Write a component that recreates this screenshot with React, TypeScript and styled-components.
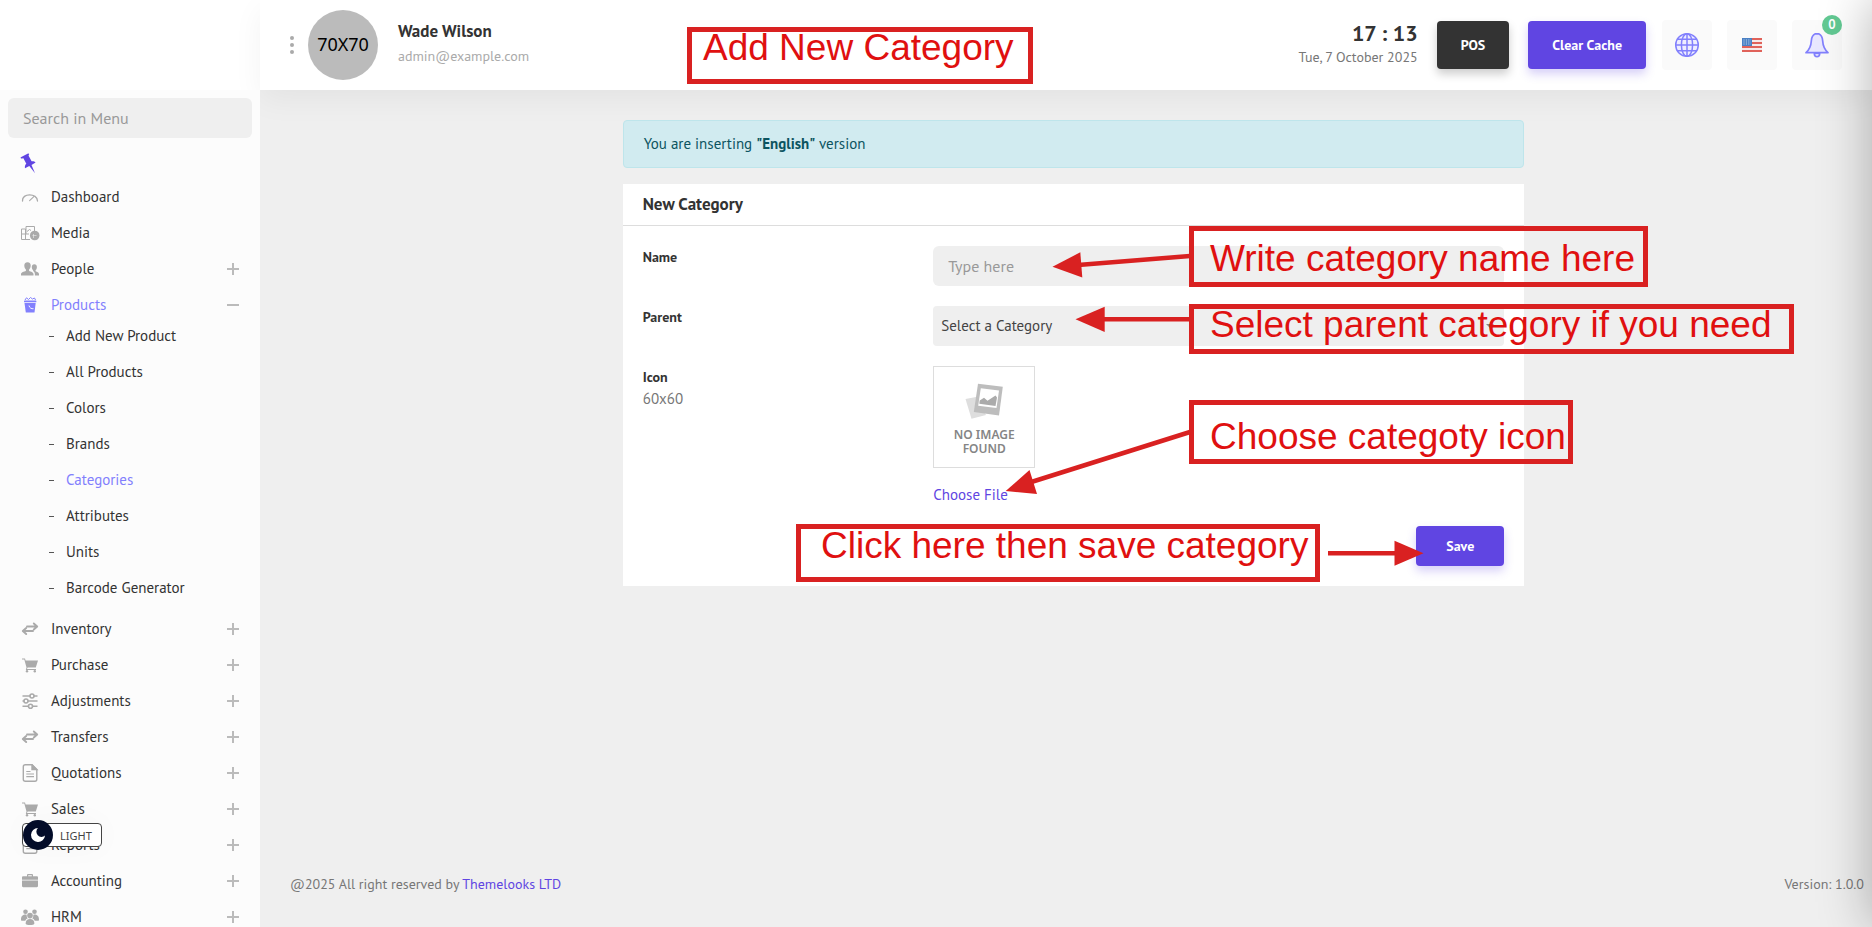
import React from "react";
import styled, { createGlobalStyle } from "styled-components";

const SANS = '"PT Sans", "Lato", "Noto Sans", sans-serif';
const PURPLE = "#6045e2";
const LILAC = "#8280fd";
const RED = "#d92121";

const GlobalStyle = createGlobalStyle`
  *, *::before, *::after { box-sizing: border-box; }
  body { margin: 0; background: #efefef; font-family: ${SANS}; font-size: 15px; line-height: 24px; color: #333; }
  button, input, select { font-family: inherit; }
  button { cursor: pointer; }
  a { text-decoration: none; }
  ul { list-style: none; margin: 0; padding: 0; }
`;

/* ---------- page frame ---------- */

const Page = styled.div`
  position: relative;
  display: flex;
  flex-direction: column;
  height: 100vh;
  min-height: 600px;
  overflow: hidden;
`;

const Header = styled.header`
  display: flex;
  flex: none;
  height: 90px;
  background: #fff;
`;

const LogoArea = styled.div`
  flex: none;
  width: 260px;
  background: #fff;
`;

const TopBar = styled.div`
  flex: 1;
  display: flex;
  align-items: center;
  justify-content: space-between;
  padding: 0 30px;
  background: #fff;
  box-shadow: 0 10px 30px rgba(0, 0, 0, 0.05);
`;

const Body = styled.div`
  flex: 1;
  display: flex;
  min-height: 0;
`;

const Sidebar = styled.aside`
  position: relative;
  flex: none;
  width: 260px;
  padding: 8px;
  overflow: hidden;
  background: #fcfcfc;
`;

const Main = styled.div`
  flex: 1;
  display: flex;
  flex-direction: column;
  justify-content: space-between;
`;

const DrawerShadow = styled.div`
  position: fixed;
  top: 0;
  left: 100%;
  width: 300px;
  height: 100vh;
  box-shadow: 0 0 50px rgba(0, 0, 0, 0.3);
`;

/* ---------- top bar ---------- */

const Profile = styled.div`
  display: flex;
  align-items: center;
`;

const DotsButton = styled.button`
  display: flex;
  flex-direction: column;
  gap: 3px;
  padding: 0;
  margin-right: 14px;
  border: 0;
  background: none;
`;

const Dot = styled.span`
  width: 4px;
  height: 4px;
  border-radius: 50%;
  background: #aaa;
`;

const Avatar = styled.div`
  width: 70px;
  height: 70px;
  margin-right: 20px;
  border-radius: 50%;
  background: #bbb;
  color: #000;
  font: 18px/68px "Noto Sans", sans-serif;
  text-align: center;
`;

const UserText = styled.div`
  padding-bottom: 4px;
`;

const UserName = styled.div`
  font-size: 17px;
  font-weight: 700;
  line-height: 26px;
`;

const UserMail = styled.div`
  color: #aaa;
  font-size: 14px;
`;

const Tools = styled.div`
  display: flex;
  align-items: center;
`;

const Clock = styled.div`
  margin-right: 19px;
  text-align: right;
`;

const Time = styled.div`
  font-size: 22px;
  font-weight: 700;
`;

const Today = styled.div`
  color: #777;
  font-size: 14px;
`;

const Button = styled.button<{ $dark?: boolean; $small?: boolean }>`
  height: ${(p) => (p.$small ? 40 : 48)}px;
  padding: 0 ${(p) => (p.$small ? 30 : 24)}px;
  border: 0;
  border-radius: 4px;
  background: ${(p) => (p.$dark ? "#333" : PURPLE)};
  box-shadow: 0 5px 10px ${(p) => (p.$dark ? "rgba(0, 0, 0, 0.2)" : "rgba(96, 69, 226, 0.25)")};
  color: #fff;
  font-size: 14px;
  font-weight: 700;
`;

const ButtonGroup = styled.div`
  display: flex;
  gap: 19px;
  margin-right: 16px;
`;

const TileGroup = styled.div`
  display: flex;
  gap: 15px;
`;

const Tile = styled.button`
  position: relative;
  display: flex;
  align-items: center;
  justify-content: center;
  width: 50px;
  height: 50px;
  padding: 0;
  border: 0;
  border-radius: 4px;
  background: #fafafa;
`;

const Badge = styled.span`
  position: absolute;
  top: -5px;
  right: 0;
  width: 20px;
  height: 20px;
  border-radius: 50%;
  background: #62c993;
  color: #fff;
  font-size: 13px;
  font-weight: 700;
  line-height: 20px;
`;

/* ---------- sidebar ---------- */

const SearchBox = styled.input`
  display: block;
  width: 100%;
  height: 40px;
  padding: 0 15px;
  border: 0;
  border-radius: 6px;
  background: #efefef;
  color: #333;
  font-size: 16px;
  &::placeholder { color: #999; opacity: 1; }
`;

const PinRow = styled.div`
  display: flex;
  height: 46px;
  padding: 15px 12px 0;
`;

const Menu = styled.ul`
  display: flex;
  flex-direction: column;
  gap: 10px;
`;

const MenuLink = styled.a<{ $active?: boolean }>`
  display: flex;
  align-items: center;
  height: 26px;
  padding: 0 13px 0 12px;
  color: ${(p) => (p.$active ? LILAC : "#333")};
  & > svg:first-child { margin-right: 11px; color: ${(p) => (p.$active ? LILAC : "#aaa")}; }
`;

const MenuText = styled.span`
  flex: 1;
`;

const SubMenu = styled.ul`
  display: flex;
  flex-direction: column;
  gap: 10px;
  padding: 5px 0 5px 41px;
`;

const SubLink = styled.a<{ $active?: boolean }>`
  display: flex;
  align-items: center;
  gap: 12px;
  height: 26px;
  color: ${(p) => (p.$active ? LILAC : "#333")};
  &::before { content: ""; width: 5px; height: 1px; background: #555; }
`;

const ModeToggle = styled.button`
  position: absolute;
  left: 22px;
  bottom: 80px;
  display: flex;
  align-items: center;
  height: 24px;
  padding: 0 9px 0 0;
  border: 1px solid #444;
  border-radius: 4px;
  background: #fff;
  box-shadow: 0 0 30px rgba(0, 0, 0, 0.03);
  color: #444;
  font: 11px "Noto Sans", sans-serif;
`;

const ModeKnob = styled.span`
  display: flex;
  align-items: center;
  justify-content: center;
  width: 30px;
  height: 30px;
  margin-right: 7px;
  border-radius: 50%;
  background: #030c29;
`;

/* ---------- content ---------- */

const Content = styled.div`
  padding-left: 15px;
`;

const Column = styled.main`
  width: calc(100% * 7 / 12);
  margin: 30px auto 0;
  padding: 0 15px;
`;

const Alert = styled.div`
  height: 48px;
  margin-bottom: 16px;
  padding: 11px 20px;
  border: 1px solid #bee5eb;
  border-radius: 4px;
  background: #d1ebf0;
  color: #0c5460;
`;

const Card = styled.form`
  background: #fff;
`;

const CardTitle = styled.h1`
  margin: 0;
  padding: 8px 20px 9px;
  border-bottom: 1px solid #ddd;
  font-size: 17px;
  line-height: 24px;
`;

const CardBody = styled.div`
  display: flex;
  flex-direction: column;
  gap: 20px;
  padding: 20px;
`;

const FieldRow = styled.div`
  display: flex;
  margin: 0 -5px;
`;

const LabelCell = styled.div`
  flex: none;
  width: calc(100% / 3);
  padding: 0 5px;
`;

const ControlCell = styled.div`
  flex: 1;
  padding: 0 5px;
`;

const Label = styled.label`
  display: block;
  font-size: 14px;
  font-weight: 700;
  line-height: 22px;
`;

const Hint = styled.span`
  display: block;
  color: #777;
  line-height: 22px;
`;

const SelectWrap = styled.div`
  display: flex;
  align-items: center;
  padding-right: 10px;
  border-radius: 4px;
  background: #efefef;
`;

const Select = styled.select`
  flex: 1;
  height: 40px;
  padding: 0 8px 2px;
  border: 0;
  background: none;
  appearance: none;
  color: #444;
  font-size: 15px;
`;

const Preview = styled.div`
  display: flex;
  flex-direction: column;
  align-items: center;
  gap: 9px;
  width: 102px;
  height: 102px;
  padding-top: 16px;
  border: 1px solid #ddd;
  color: #858585;
  font: 600 12px/14px "Noto Sans", sans-serif;
  text-align: center;
`;

const FileButton = styled.button`
  display: block;
  margin-top: 15px;
  padding: 0;
  border: 0;
  background: none;
  color: ${PURPLE};
  font-size: 15px;
  line-height: 23px;
`;

const Actions = styled.div`
  display: flex;
  justify-content: flex-end;
`;

const Footer = styled.footer`
  display: flex;
  justify-content: space-between;
  padding: 0 8px 31px 30px;
  color: #777;
  font-size: 14px;
`;

const FooterLink = styled.a`
  color: ${PURPLE};
`;

/* ---------- callouts drawn over the page ---------- */

const Callout = styled.div<{ $x: number; $y: number; $w: number; $h: number; $pad: string }>`
  position: absolute;
  left: ${(p) => p.$x}px;
  top: ${(p) => p.$y}px;
  width: ${(p) => p.$w}px;
  height: ${(p) => p.$h}px;
  padding: ${(p) => p.$pad};
  border: 5px solid ${RED};
  color: #e01010;
  font: 37px/32px "Liberation Sans", Arial, sans-serif;
  white-space: nowrap;
`;

const Arrows = styled.svg`
  position: absolute;
  top: 0;
  left: 0;
  pointer-events: none;
`;

/* ---------- icons ---------- */

type IconName =
  | "gauge" | "media" | "people" | "bucket" | "swap" | "cart"
  | "sliders" | "file" | "case" | "team";

const iconShapes: Record<IconName, React.ReactNode> = {
  gauge: (
    <g fill="none" stroke="currentColor" strokeLinecap="round">
      <path d="M1.500 13C.7 4.800 16.300 4.800 16.500 13" strokeWidth="1.300" />
      <path d="M8.600 12.600L12.800 8.600" strokeWidth="1.100" />
    </g>
  ),
  media: (
    <g fill="none" stroke="currentColor">
      <path d="M.5 5V15.500H9" />
      <path d="M.5 10H4.500M.5 5H4.500V15" />
      <path d="M5 2.500H13.500V7M5 2.500V10H8" />
      <path d="M6 7.500L8.500 5.500L10 6.500" />
      <circle cx="13.700" cy="11.500" r="4.800" fill="currentColor" stroke="none" />
      <path d="M11.500 11.500H15.500M12.500 14V10" stroke="#eee" strokeWidth=".6" />
    </g>
  ),
  people: (
    <g fill="currentColor">
      <path d="M6.500 2.200C4.200 2.200 3.300 3.800 3.300 5.600C3.300 7.400 4.100 8.900 4.900 9.600V11C3 11.600 0 12.300 0 14.300V15.500H12.500V14.300C12.500 12.300 9.900 11.600 8.100 11V9.600C8.900 8.900 9.700 7.400 9.700 5.600C9.700 3.800 8.800 2.200 6.500 2.200Z" />
      <path d="M13.300 4.200C11.600 4.200 10.800 5.400 10.800 6.900C10.800 8.400 11.400 9.500 12.100 10.100V11C13 11.500 13.900 12.500 13.900 14.300V15.500H18V14C18 12.500 16 11.700 14.600 11.200V10.100C15.300 9.500 15.900 8.400 15.900 6.900C15.900 5.400 15 4.200 13.300 4.200Z" />
    </g>
  ),
  bucket: (
    <g fill="currentColor">
      <path d="M3.500 7H14.700L13.500 16.500H4.800Z" />
      <rect x="3" y="4.600" width="12.400" height="1.700" rx=".6" />
      <path d="M4 4L5.500 1.800L7.500 3.500L9.500 1.500L11.500 3L13.500 2L14.500 4" fill="none" stroke="currentColor" />
      <path d="M8 9.500C8.500 12 10.500 13 12.500 12.700" fill="none" stroke="#fff" strokeWidth=".9" />
    </g>
  ),
  swap: (
    <g fill="none" stroke="currentColor" strokeWidth="1.900" strokeLinejoin="round" strokeLinecap="round">
      <path d="M6 6.500H16M12.800 3.500L16.200 6.500L12.800 9.500" />
      <path d="M12 11H2.200M5.200 8L1.800 11L5.200 14" />
    </g>
  ),
  cart: (
    <g fill="currentColor">
      <path d="M1 2.500H4L4.600 4.500H17L14.800 11.500H6.600L6 13H15V14H4.800L5.500 11.600L3.300 3.500H1Z" />
      <circle cx="6" cy="15.300" r="1.200" />
      <circle cx="13.800" cy="15.300" r="1.200" />
    </g>
  ),
  sliders: (
    <g fill="none" stroke="currentColor" strokeWidth="1.600">
      <path d="M1.500 4H9M13 4H16.500M1.500 9H3M7 9H16.500M1.500 14.300H7.500M11.500 14.300H16.500" />
      <circle cx="11" cy="4" r="2" />
      <circle cx="5" cy="9" r="2" />
      <circle cx="9.500" cy="14.300" r="2" />
    </g>
  ),
  file: (
    <g fill="none" stroke="currentColor" strokeWidth="1.400">
      <path d="M4.300 .8H11L15.800 5.500V15.200C15.800 16.400 15.200 17.200 14 17.200H4.300C3.100 17.200 2.300 16.400 2.300 15.200V2.800C2.300 1.600 3.100 .8 4.300 .8Z" />
      <path d="M11 .8V5.500H15.800Z" fill="currentColor" />
      <path d="M5.300 7.500H9.500M5.300 10H13M5.300 12.700H13" strokeWidth="1.200" />
    </g>
  ),
  case: (
    <g fill="currentColor">
      <path d="M1 5.500C1 4.700 1.500 4.200 2.300 4.200H6V3.200C6 2.400 6.400 2 7.200 2H10.800C11.600 2 12 2.400 12 3.200V4.200H15.700C16.500 4.200 17 4.700 17 5.500V7.700H1ZM7.200 4.200H10.800V3.200H7.200Z" />
      <path d="M1 8.500H17V14C17 14.700 16.500 15.200 15.700 15.200H2.300C1.500 15.200 1 14.700 1 14Z" />
    </g>
  ),
  team: (
    <g fill="currentColor">
      <circle cx="4.500" cy="3.800" r="2.300" />
      <circle cx="13.500" cy="3.800" r="2.300" />
      <circle cx="9" cy="7.600" r="2.800" />
      <path d="M0 11.500C0 8 2 6.600 4.500 6.600C5 6.600 5.400 6.700 5.700 6.900C5.600 8.500 6 9.600 6.800 10.400C5.500 10.800 4.700 11.500 4.300 12.800H1C.3 12.800 0 12.300 0 11.500Z" />
      <path d="M18 11.500C18 8 16 6.600 13.500 6.600C13 6.600 12.600 6.700 12.300 6.900C12.400 8.500 12 9.600 11.200 10.400C12.500 10.800 13.300 11.500 13.700 12.800H17C17.700 12.800 18 12.300 18 11.500Z" />
      <path d="M4.600 15.500C4.600 12.300 6.500 11 9 11C11.500 11 13.400 12.300 13.400 15.500C13.400 16.500 11 17 9 17C7 17 4.600 16.500 4.600 15.500Z" />
    </g>
  ),
};

const MenuIcon = ({ name }: { name: IconName }) => (
  <svg width="20" height="18" viewBox="-1 0 20 18" aria-hidden="true">{iconShapes[name]}</svg>
);

const Expander = ({ open }: { open?: boolean }) => (
  <svg width="12" height="12" viewBox="0 0 12 12" aria-hidden="true" stroke="#bbb" strokeWidth="2">
    <path d={open ? "M0 6H12" : "M0 6H12M6 0V12"} />
  </svg>
);

const PinIcon = () => (
  <svg width="18" height="21" viewBox="0 0 18 21" aria-hidden="true">
    <path
      fill={PURPLE}
      d="M.8 4.200L8 .6C9 .2 9.600 1.200 8.800 1.800L8.600 2.700L11.600 8.300C13.100 8.100 14.800 8.500 15.600 9.400L11.500 12.100L15 20.200L9.300 13.100L5 15.200C4.500 13.500 5.200 11.800 6.300 10.800L3.400 5.300L1.800 5.500C.8 5.600 .3 4.700 .8 4.200Z"
    />
  </svg>
);

const GlobeIcon = () => (
  <svg width="26" height="26" viewBox="0 0 26 26" fill="none" stroke={LILAC} strokeWidth="1.500" aria-hidden="true">
    <circle cx="13" cy="13" r="11.300" fill="#eeedff" />
    <ellipse cx="13" cy="13" rx="5.600" ry="11.300" />
    <path d="M13 1.700V24.300M1.700 13H24.300M3.500 7.300H22.500M3.500 18.700H22.500" />
  </svg>
);

const BellIcon = () => (
  <svg width="26" height="26" viewBox="0 0 26 26" stroke={LILAC} strokeWidth="1.700" strokeLinejoin="round" aria-hidden="true">
    <path d="M10.300 21.500C10.300 25.600 15.700 25.600 15.700 21.500Z" fill="#fff" />
    <path d="M11.300 1.800H14.700C17.500 3 18.500 5.500 18.700 9C19 15 20.500 17.500 24 20.700H2C5.500 17.500 7 15 7.300 9C7.500 5.500 8.500 3 11.300 1.800Z" fill="#e9e8ff" />
  </svg>
);

const FlagIcon = () => (
  <svg width="20" height="14" viewBox="0 0 20 14" aria-hidden="true">
    <rect width="20" height="14" fill="#f6e9e9" />
    <path d="M0 1H20M0 5H20M0 9H20M0 13H20" stroke="#e0625a" strokeWidth="1.800" />
    <rect width="10" height="8" fill="#4a80c4" />
    <path d="M1.500 2H9M1.500 4H9M1.500 6H9" stroke="#d5e4f5" strokeWidth=".9" strokeDasharray="1 1.400" />
  </svg>
);

const MoonIcon = () => (
  <svg width="14" height="14" viewBox="0 0 14 14" aria-hidden="true">
    <path fill="#fff" d="M7 0A7 7 0 1 0 14 7.500A4.500 4.500 0 1 1 7 0Z" />
  </svg>
);

const PhotosIcon = () => (
  <svg width="38" height="36" viewBox="0 0 38 36" aria-hidden="true">
    <path d="M.5 16L11 14L21 32L6.500 35.800Z" fill="#dedede" />
    <path d="M13 .8L37.800 3.800L34 32.500L8.800 29Z" fill="#bdbdbd" />
    <path d="M15.800 5.300L34 7.400L31.500 25L13.200 22.800Z" fill="#fff" />
    <path d="M14.300 20.800L14.700 17.500L19 14.800L22.500 17.800L30.500 12.500L32 14.500L30.500 23Z" fill="#ababab" />
  </svg>
);

/* ---------- data ---------- */

type Item = { text: string; icon: IconName; expandable?: boolean; children?: string[] };

const menu: Item[] = [
  { text: "Dashboard", icon: "gauge" },
  { text: "Media", icon: "media" },
  { text: "People", icon: "people", expandable: true },
  {
    text: "Products",
    icon: "bucket",
    expandable: true,
    children: [
      "Add New Product", "All Products", "Colors", "Brands",
      "Categories", "Attributes", "Units", "Barcode Generator",
    ],
  },
  { text: "Inventory", icon: "swap", expandable: true },
  { text: "Purchase", icon: "cart", expandable: true },
  { text: "Adjustments", icon: "sliders", expandable: true },
  { text: "Transfers", icon: "swap", expandable: true },
  { text: "Quotations", icon: "file", expandable: true },
  { text: "Sales", icon: "cart", expandable: true },
  { text: "Reports", icon: "file", expandable: true },
  { text: "Accounting", icon: "case", expandable: true },
  { text: "HRM", icon: "team", expandable: true },
];

export default function App() {
  return (
    <Page>
      <GlobalStyle />
      <Header>
        <LogoArea />
        <TopBar>
          <Profile>
            <DotsButton aria-label="Toggle menu"><Dot /><Dot /><Dot /></DotsButton>
            <Avatar>70X70</Avatar>
            <UserText>
              <UserName>Wade Wilson</UserName>
              <UserMail>admin@example.com</UserMail>
            </UserText>
          </Profile>
          <Tools>
            <Clock>
              <Time>17 : 13</Time>
              <Today>Tue, 7 October 2025</Today>
            </Clock>
            <ButtonGroup>
              <Button $dark>POS</Button>
              <Button>Clear Cache</Button>
            </ButtonGroup>
            <TileGroup>
              <Tile aria-label="Visit site"><GlobeIcon /></Tile>
              <Tile aria-label="Language"><FlagIcon /></Tile>
              <Tile aria-label="Notifications"><BellIcon /><Badge>0</Badge></Tile>
            </TileGroup>
          </Tools>
        </TopBar>
      </Header>

      <Body>
        <Sidebar>
          <SearchBox placeholder="Search in Menu" aria-label="Search in Menu" />
          <PinRow><PinIcon /></PinRow>
          <Menu>
            {menu.map((item) => (
              <li key={item.text}>
                <MenuLink href="#" $active={!!item.children}>
                  <MenuIcon name={item.icon} />
                  <MenuText>{item.text}</MenuText>
                  {item.expandable && <Expander open={!!item.children} />}
                </MenuLink>
                {item.children && (
                  <SubMenu>
                    {item.children.map((text) => (
                      <li key={text}>
                        <SubLink href="#" $active={text === "Categories"}>{text}</SubLink>
                      </li>
                    ))}
                  </SubMenu>
                )}
              </li>
            ))}
          </Menu>
          <ModeToggle><ModeKnob><MoonIcon /></ModeKnob>LIGHT</ModeToggle>
        </Sidebar>

        <Main>
          <Content>
            <Column>
              <Alert>You are inserting <strong>"English"</strong> version</Alert>
              <Card>
                <CardTitle>New Category</CardTitle>
                <CardBody>
                  <FieldRow>
                    <LabelCell><Label htmlFor="name">Name</Label></LabelCell>
                    <ControlCell><SearchBox id="name" placeholder="Type here" /></ControlCell>
                  </FieldRow>
                  <FieldRow>
                    <LabelCell><Label htmlFor="parent">Parent</Label></LabelCell>
                    <ControlCell>
                      <SelectWrap>
                        <Select id="parent"><option>Select a Category</option></Select>
                        <svg width="8" height="4" viewBox="0 0 8 4" aria-hidden="true"><path d="M0 0H8L4 4Z" fill="#888" /></svg>
                      </SelectWrap>
                    </ControlCell>
                  </FieldRow>
                  <FieldRow>
                    <LabelCell>
                      <Label htmlFor="icon">Icon</Label>
                      <Hint>60x60</Hint>
                    </LabelCell>
                    <ControlCell>
                      <Preview><PhotosIcon /><div>NO IMAGE<br />FOUND</div></Preview>
                      <FileButton type="button" id="icon">Choose File</FileButton>
                    </ControlCell>
                  </FieldRow>
                  <Actions><Button $small type="button">Save</Button></Actions>
                </CardBody>
              </Card>
            </Column>
          </Content>
          <Footer>
            <span>@2025 All right reserved by <FooterLink href="#">Themelooks LTD</FooterLink></span>
            <span>Version: 1.0.0</span>
          </Footer>
        </Main>
      </Body>

      <DrawerShadow />

      <Callout $x={687} $y={27} $w={346} $h={57} $pad="0 11px">Add New Category</Callout>
      <Callout $x={1189} $y={226} $w={459} $h={61} $pad="12px 16px">Write category name here</Callout>
      <Callout $x={1189} $y={304} $w={605} $h={50} $pad="0 16px">Select parent category if you need</Callout>
      <Callout $x={1189} $y={400} $w={384} $h={64} $pad="16px 16px">Choose categoty icon</Callout>
      <Callout $x={796} $y={524} $w={524} $h={58} $pad="1px 20px">Click here then save category</Callout>
      <Arrows width="1440" height="600" viewBox="0 0 1440 600" aria-hidden="true">
        <g stroke={RED} strokeWidth="4.500">
          <path d="M1190 256L1075 265.200M1190 319.300H1095M1190 432L1025 484M1328 553.300H1400" />
        </g>
        <g fill={RED}>
          <path d="M1052.500 266.700L1080.300 252.300L1082.300 277.500Z" />
          <path d="M1075.500 319.300L1104.700 306.800V332Z" />
          <path d="M1005.700 491L1029.500 470L1037 494Z" />
          <path d="M1423.500 553.300L1394.500 540.800V565.800Z" />
        </g>
      </Arrows>
    </Page>
  );
}
